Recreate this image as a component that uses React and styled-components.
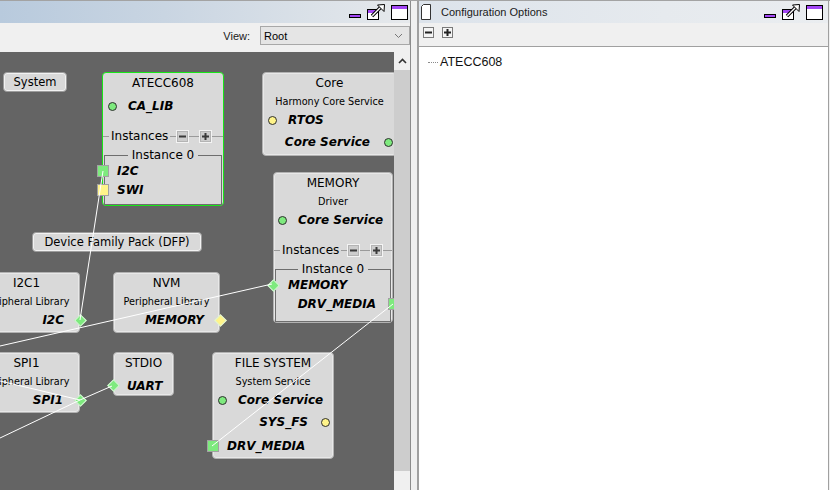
import React from "react";
import styled, { createGlobalStyle } from "styled-components";

const Global = createGlobalStyle`
  html, body { margin: 0; padding: 0; background: #f0f0f0; overflow: hidden; }
  #root { width: 830px; height: 490px; }
`;

const PURPLE = "#a347f5";
const GREEN = "#7eea7e";
const YELLOW = "#fff48a";

const Frame = styled.div`
  display: flex;
  width: 830px;
  height: 490px;
  box-sizing: border-box;
  border-top: 1px solid #a3a3a3;
  background: #f0f0f0;
  font-family: "Liberation Sans", Arial, sans-serif;
  font-size: 11px;
  color: #000;
`;

const LeftPanel = styled.div`
  width: 411px;
  flex: none;
  display: flex;
  flex-direction: column;
  box-sizing: border-box;
  border-right: 1px solid #8c8c8c;
`;

const Splitter = styled.div`
  width: 6px;
  flex: none;
  background: #f0f0f0;
`;

const RightPanel = styled.div`
  width: 412px;
  flex: none;
  display: flex;
  flex-direction: column;
  box-sizing: border-box;
  border-left: 2px solid #a0a0a0;
  border-right: 1px solid #a0a0a0;
`;

const TitleBar = styled.div`
  height: 22px;
  flex: none;
  display: flex;
  align-items: stretch;
  padding: 0 ${(p) => p.$pr}px 0 ${(p) => p.$pl}px;
  background: ${(p) =>
    p.$tone === "blue"
      ? "linear-gradient(90deg, #b8cadd 0%, #c9d5e2 40%, #e6e9ec 100%)"
      : "linear-gradient(90deg, #dce3eb 0%, #e6eaee 60%, #eaedf0 100%)"};
`;

const TitleText = styled.div`
  display: flex;
  align-items: center;
  margin-left: 10px;
  font-size: 11px;
  color: #1a1a1a;
`;

const Spacer = styled.div`
  flex: 1;
`;

const WinButtons = styled.div`
  display: flex;
  align-items: stretch;
  gap: ${(p) => p.$gap}px;
`;

const Toolbar = styled.div`
  height: ${(p) => p.$h}px;
  flex: none;
  display: flex;
  align-items: flex-start;
  justify-content: ${(p) => (p.$end ? "flex-end" : "flex-start")};
  padding-top: ${(p) => p.$pt}px;
  padding-left: ${(p) => p.$pl || 0}px;
  box-sizing: border-box;
  gap: ${(p) => p.$gap}px;
  background: #f0f0f0;
`;

const ViewLabel = styled.span`
  height: 19px;
  display: flex;
  align-items: center;
  color: #1a1a1a;
`;

const Select = styled.div`
  width: 150px;
  height: 19px;
  box-sizing: border-box;
  border: 1px solid #a8a8a8;
  background: #e5e5e5;
  display: flex;
  align-items: center;
  padding: 0 6px 0 3px;
  justify-content: space-between;
`;

const CanvasRow = styled.div`
  flex: 1;
  display: flex;
  min-height: 0;
`;

const Canvas = styled.div`
  position: relative;
  width: 394px;
  flex: none;
  overflow: hidden;
  background: #646464;
  font-family: "DejaVu Sans", "Liberation Sans", sans-serif;
  font-size: 12px;
  color: #000;
`;

const Scrollbar = styled.div`
  width: 16px;
  flex: none;
  display: flex;
  flex-direction: column;
  background: #f0f0f0;
`;

const ScrollArrow = styled.div`
  height: 18px;
  display: flex;
  align-items: center;
  justify-content: center;
`;

const ScrollThumb = styled.div`
  height: 401px;
  background: #cdcdcd;
`;

const Lines = styled.svg`
  position: absolute;
  left: 0;
  top: 0;
  pointer-events: none;
`;

const CanvasButton = styled.div`
  position: absolute;
  left: ${(p) => p.$x}px;
  top: ${(p) => p.$y}px;
  width: ${(p) => p.$w}px;
  height: 20px;
  box-sizing: border-box;
  border: 1px solid #9c9c9c;
  border-radius: 4px;
  box-shadow: inset 0 0 0 1px #f2f2f2;
  background: #d9d9d9;
  display: flex;
  align-items: center;
  justify-content: center;
  font-size: 11.5px;
  white-space: nowrap;
`;

const Node = styled.div`
  position: absolute;
  left: ${(p) => p.$x}px;
  top: ${(p) => p.$y}px;
  width: ${(p) => p.$w}px;
  height: ${(p) => p.$h}px;
  box-sizing: border-box;
  background: #d9d9d9;
  border: 1px solid ${(p) => (p.$selected ? "#18e618" : "#b2b2b2")};
  border-radius: 4px;
  box-shadow: ${(p) => (p.$selected ? "none" : "inset 0 0 0 1px #e8e8e8")};
  display: flex;
  flex-direction: column;
`;

const NodeTitle = styled.div`
  height: 19px;
  flex: none;
  display: flex;
  align-items: center;
  justify-content: center;
  white-space: nowrap;
`;

const NodeSub = styled.div`
  height: 18px;
  flex: none;
  display: flex;
  align-items: center;
  justify-content: center;
  font-size: 9.7px;
  white-space: nowrap;
`;

const Port = styled.div`
  position: relative;
  flex: none;
  display: flex;
  align-items: center;
  justify-content: ${(p) => (p.$end ? "flex-end" : "flex-start")};
  height: ${(p) => p.$h ?? 20}px;
  margin-top: ${(p) => p.$mt ?? 0}px;
  padding: 0 ${(p) => p.$pr ?? 0}px 0 ${(p) => p.$pl ?? 0}px;
  gap: ${(p) => p.$gap ?? 11}px;
  font-weight: bold;
  font-style: italic;
  white-space: nowrap;
`;

const Dot = styled.span`
  width: 9px;
  height: 9px;
  flex: none;
  box-sizing: border-box;
  border-radius: 50%;
  border: 1px solid #2e2e2e;
  background: ${(p) => (p.$c === "y" ? YELLOW : GREEN)};
`;

const Pin = styled.span`
  position: absolute;
  top: 50%;
  ${(p) => (p.$left != null ? `left: ${p.$left}px;` : `right: ${p.$right}px;`)}
  width: ${(p) => (p.$diamond ? 9 : 12)}px;
  height: ${(p) => (p.$diamond ? 9 : 12)}px;
  margin-top: ${(p) => (p.$diamond ? -4.5 : -6)}px;
  box-sizing: border-box;
  background: ${(p) => (p.$c === "y" ? YELLOW : GREEN)};
  border: 1px solid ${(p) => (p.$diamond ? "#dcf3dc" : "#a2a2a2")};
  transform: ${(p) => (p.$diamond ? "rotate(45deg)" : "none")};
`;

const InstRow = styled.div`
  flex: none;
  height: 18px;
  margin-top: 11px;
  display: flex;
  align-items: center;
`;

const Rule = styled.span`
  height: 1px;
  background: #9a9a9a;
  flex: ${(p) => (p.$grow ? "1" : "none")};
  width: ${(p) => p.$w || 0}px;
`;

const InstLabel = styled.span`
  padding: 0 2px;
  white-space: nowrap;
`;

const MiniBtn = styled.span`
  width: 13px;
  height: 13px;
  flex: none;
  box-sizing: border-box;
  border: 1px solid #f4f4f4;
  box-shadow: inset 0 0 0 1px #b4b4b4;
  background: #cdcdcd;
  display: flex;
  align-items: center;
  justify-content: center;
`;

const Group = styled.fieldset`
  flex: 1;
  margin: 3px 1px 0;
  padding: 0;
  min-width: 0;
  border: 1px solid #6e6e6e;
  display: flex;
  flex-direction: column;
`;

const GroupLegend = styled.legend`
  margin: 0 auto;
  padding: 0 4px;
  line-height: 14px;
  font-size: 12px;
  white-space: nowrap;
`;

const TreeArea = styled.div`
  flex: 1;
  background: #fff;
  border-top: 1px solid #a0a0a0;
  padding-top: 6px;
`;

const TreeRow = styled.div`
  height: 18px;
  display: flex;
  align-items: center;
  padding-left: 9px;
  font-size: 12.5px;
  color: #111;
`;

const TreeConnector = styled.span`
  width: 10px;
  margin-right: 2px;
  border-top: 1px dotted #8a8a8a;
`;

const TreeBtn = styled.span`
  width: 11px;
  height: 11px;
  box-sizing: border-box;
  border: 1px solid #7a7a7a;
  background: #f4f4f4;
  display: flex;
  align-items: center;
  justify-content: center;
`;

/* ---------- icons ---------- */

const MinIcon = () => (
  <svg width="12" height="22" viewBox="0 0 12 22">
    <rect x="0.5" y="13.5" width="11" height="3" fill={PURPLE} stroke="#000" />
  </svg>
);

const FloatIcon = () => (
  <svg width="18" height="22" viewBox="0 0 18 22">
    <rect x="0.5" y="8.5" width="11" height="10" fill="#fff" stroke="#000" />
    <rect x="1" y="9" width="10" height="3" fill={PURPLE} />
    <path d="M5 15 L13.5 6.5" stroke="#000" strokeWidth="3.4" />
    <path d="M5.3 14.7 L13.5 6.5" stroke="#fff" strokeWidth="1.4" />
    <polygon points="17.5,3.5 10.5,4 17,10.5" fill="#fff" stroke="#000" strokeWidth="1" strokeLinejoin="miter" />
  </svg>
);

const MaxIcon = () => (
  <svg width="17" height="22" viewBox="0 0 17 22">
    <rect x="0.5" y="4.5" width="16" height="14" fill="#fff" stroke="#000" />
    <rect x="1" y="5" width="15" height="3" fill={PURPLE} />
  </svg>
);

const DocIcon = () => (
  <svg width="10" height="22" viewBox="0 0 10 22">
    <path d="M0.5 5.5 L2.5 3.5 H9.5 V18.5 H0.5 Z" fill="#fff" stroke="#333" />
  </svg>
);

const Chevron = ({ up }) => (
  <svg width="9" height="6" viewBox="0 0 9 6">
    <path
      d={up ? "M1 5 L4.5 1.5 L8 5" : "M1 1 L4.5 4.5 L8 1"}
      fill="none"
      stroke={up ? "#333" : "#777"}
      strokeWidth={up ? 1.6 : 1}
    />
  </svg>
);

const Sign = ({ plus, size = 7, color = "#3a3a3a" }) => (
  <svg width={size} height={size} viewBox={`0 0 ${size} ${size}`}>
    <rect x="0" y={(size - 2) / 2} width={size} height="2" fill={color} />
    {plus && <rect x={(size - 2) / 2} y="0" width="2" height={size} fill={color} />}
  </svg>
);

const Instances = () => (
  <InstRow>
    <Rule $w={6} />
    <InstLabel>Instances</InstLabel>
    <Rule $w={6} />
    <MiniBtn>
      <Sign />
    </MiniBtn>
    <Rule $w={10} />
    <MiniBtn>
      <Sign plus />
    </MiniBtn>
    <Rule $grow />
  </InstRow>
);

export default function App() {
  return (
    <>
      <Global />
      <Frame>
        <LeftPanel>
          <TitleBar $tone="blue" $pl={0} $pr={2}>
            <Spacer />
            <WinButtons $gap={6}>
              <MinIcon />
              <FloatIcon />
              <MaxIcon />
            </WinButtons>
          </TitleBar>
          <Toolbar $h={29} $pt={3} $gap={10} $end>
            <ViewLabel>View:</ViewLabel>
            <Select>
              <span>Root</span>
              <Chevron />
            </Select>
          </Toolbar>
          <CanvasRow>
            <Canvas>
              <CanvasButton $x={3} $y={20} $w={64}>System</CanvasButton>
              <CanvasButton $x={32} $y={180} $w={170}>Device Family Pack (DFP)</CanvasButton>

              <Node $x={102} $y={20} $w={122} $h={134} $selected>
                <NodeTitle>ATECC608</NodeTitle>
                <Port $mt={4} $pl={5}>
                  <Dot />
                  CA_LIB
                </Port>
                <Instances />
                <Group>
                  <GroupLegend>Instance 0</GroupLegend>
                  <Port $h={18} $pl={12}>
                    <Pin $left={-8} />
                    I2C
                  </Port>
                  <Port $pl={12}>
                    <Pin $left={-8} $c="y" />
                    SWI
                  </Port>
                </Group>
              </Node>

              <Node $x={262} $y={20} $w={135} $h={84}>
                <NodeTitle>Core</NodeTitle>
                <NodeSub>Harmony Core Service</NodeSub>
                <Port $pl={5}>
                  <Dot $c="y" />
                  RTOS
                </Port>
                <Port $mt={2} $end $pr={3} $gap={14}>
                  Core Service
                  <Dot />
                </Port>
              </Node>

              <Node $x={273} $y={120} $w={120} $h={151}>
                <NodeTitle>MEMORY</NodeTitle>
                <NodeSub>Driver</NodeSub>
                <Port $pl={4}>
                  <Dot />
                  Core Service
                </Port>
                <Instances />
                <Group>
                  <GroupLegend>Instance 0</GroupLegend>
                  <Port $h={18} $pl={12}>
                    <Pin $left={-7.5} $diamond />
                    MEMORY
                  </Port>
                  <Port $end $pr={14}>
                    <Pin $right={-9.5} />
                    DRV_MEDIA
                  </Port>
                </Group>
              </Node>

              <Node $x={-27} $y={220} $w={107} $h={61}>
                <NodeTitle>I2C1</NodeTitle>
                <NodeSub>Peripheral Library</NodeSub>
                <Port $end $pr={15}>
                  I2C
                  <Pin $right={-5.5} $diamond />
                </Port>
              </Node>

              <Node $x={113} $y={220} $w={107} $h={61}>
                <NodeTitle>NVM</NodeTitle>
                <NodeSub>Peripheral Library</NodeSub>
                <Port $end $pr={15}>
                  MEMORY
                  <Pin $right={-6} $diamond $c="y" />
                </Port>
              </Node>

              <Node $x={-27} $y={300} $w={107} $h={61}>
                <NodeTitle>SPI1</NodeTitle>
                <NodeSub>Peripheral Library</NodeSub>
                <Port $end $pr={16}>
                  SPI1
                  <Pin $right={-5.5} $diamond />
                </Port>
              </Node>

              <Node $x={113} $y={300} $w={61} $h={44}>
                <NodeTitle>STDIO</NodeTitle>
                <Port $h={19} $mt={4} $pl={13}>
                  <Pin $left={-5.5} $diamond />
                  UART
                </Port>
              </Node>

              <Node $x={212} $y={300} $w={122} $h={107}>
                <NodeTitle>FILE SYSTEM</NodeTitle>
                <NodeSub>System Service</NodeSub>
                <Port $pl={5}>
                  <Dot />
                  Core Service
                </Port>
                <Port $mt={2} $end $pr={3} $gap={13}>
                  SYS_FS
                  <Dot $c="y" />
                </Port>
                <Port $mt={4} $pl={14}>
                  <Pin $left={-6.5} />
                  DRV_MEDIA
                </Port>
              </Node>

              <Lines width="394" height="438" viewBox="0 0 394 438">
                <g stroke="#fff" strokeWidth="1" fill="none">
                  <line x1="103" y1="119" x2="80" y2="268" />
                  <line x1="272" y1="232" x2="0" y2="294" />
                  <line x1="393" y1="252" x2="212" y2="394" />
                  <polyline points="0,386 80,348 112,334" />
                  <line x1="0" y1="329" x2="80" y2="348" />
                </g>
              </Lines>
            </Canvas>
            <Scrollbar>
              <ScrollArrow>
                <Chevron up />
              </ScrollArrow>
              <ScrollThumb />
            </Scrollbar>
          </CanvasRow>
        </LeftPanel>

        <Splitter />

        <RightPanel>
          <TitleBar $tone="gray" $pl={2} $pr={5}>
            <DocIcon />
            <TitleText>Configuration Options</TitleText>
            <Spacer />
            <WinButtons $gap={6}>
              <MinIcon />
              <FloatIcon />
              <MaxIcon />
            </WinButtons>
          </TitleBar>
          <Toolbar $h={23} $pt={4} $pl={4} $gap={8}>
            <TreeBtn>
              <Sign size={7} color="#222" />
            </TreeBtn>
            <TreeBtn>
              <Sign plus size={7} color="#222" />
            </TreeBtn>
          </Toolbar>
          <TreeArea>
            <TreeRow>
              <TreeConnector />
              ATECC608
            </TreeRow>
          </TreeArea>
        </RightPanel>
      </Frame>
    </>
  );
}
